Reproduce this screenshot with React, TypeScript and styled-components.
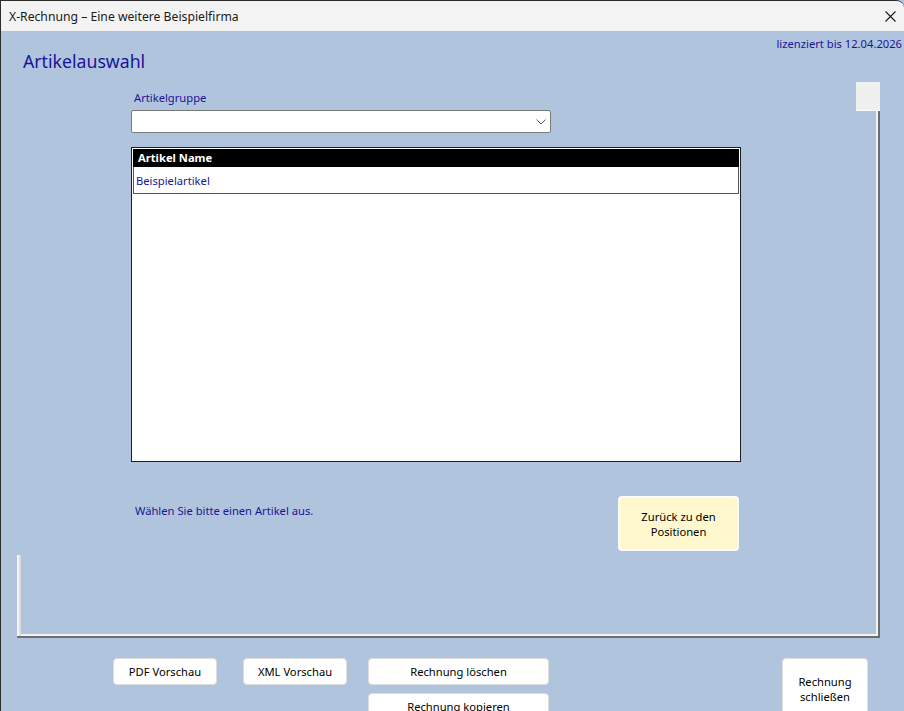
import styled, { createGlobalStyle } from "styled-components";

const GlobalStyle = createGlobalStyle`
	html, body {
		margin: 0;
		padding: 0;
		background: #b0c4de;
	}
	body {
		font-family: "Noto Sans", "Open Sans", Arial, sans-serif;
		font-size: 11.2px;
	}
`;

const TEXT_BLUE = "#1b1496";

const Window = styled.div`
	width: 904px;
	height: 711px;
	box-sizing: border-box;
	overflow: hidden;
	border-top: 1px solid #2b2b2b;
	border-left: 1px solid #2b2b2b;
	border-top-right-radius: 8px;
	background: #b0c4de;
	display: flex;
	flex-direction: column;
`;

const TitleBar = styled.div`
	height: 30px;
	flex: none;
	background: #f3f3f3;
	display: flex;
	align-items: center;
	justify-content: space-between;
	padding-left: 8px;
	color: #1a1a1a;
	font-size: 12.2px;
`;

const CloseButton = styled.div`
	width: 46px;
	height: 30px;
	display: flex;
	align-items: center;
	justify-content: center;
	margin-right: -9px;
`;

const Header = styled.div`
	height: 51px;
	flex: none;
	display: flex;
	justify-content: space-between;
	align-items: flex-start;
`;

const PageTitle = styled.h1`
	margin: 18px 0 0 22px;
	font-size: 17.7px;
	font-weight: normal;
	line-height: 24px;
	color: ${TEXT_BLUE};
`;

const License = styled.div`
	margin: 5px 2px 0 0;
	line-height: 16px;
	color: ${TEXT_BLUE};
`;

const Stage = styled.div`
	position: relative;
	flex: none;
	box-sizing: border-box;
	margin-left: 16px;
	width: 863px;
	height: 556px;
	padding: 8px 0 0 114px;
	border-right: 2px solid #6e6e6e;
	border-bottom: 2px solid #6e6e6e;
	box-shadow: inset -2px -2px 0 #f4f4f4;
	display: flex;
	flex-direction: column;

	&::before {
		content: "";
		position: absolute;
		top: 0;
		right: -2px;
		width: 24px;
		height: 28px;
		background: #f0f0f0;
		border-bottom: 1px solid #ffffff;
	}

	&::after {
		content: "";
		position: absolute;
		left: 0;
		bottom: 0;
		width: 4px;
		height: 81px;
		background: linear-gradient(to right, #f4f4f4 2px, #dcdcdc 2px);
	}
`;

const FieldLabel = styled.label`
	margin-left: 3px;
	line-height: 16px;
	color: ${TEXT_BLUE};
`;

const Select = styled.div`
	margin-top: 4px;
	width: 420px;
	height: 23px;
	box-sizing: border-box;
	background: #ffffff;
	border: 1px solid #7a7a7a;
	border-radius: 2px;
	display: flex;
	align-items: center;
	justify-content: flex-end;
	padding-right: 4px;
`;

const ListBox = styled.div`
	margin-top: 14px;
	width: 610px;
	height: 315px;
	box-sizing: border-box;
	background: #ffffff;
	border: 1px solid #1e1e1e;
	padding: 1px;
`;

const ListHeader = styled.div`
	height: 18px;
	line-height: 18px;
	background: #000000;
	color: #ffffff;
	font-weight: bold;
	padding-left: 5px;
`;

const ListRow = styled.div`
	height: 26px;
	line-height: 27px;
	border: 1px solid #555555;
	border-top: none;
	padding-left: 2px;
	color: ${TEXT_BLUE};
`;

const FooterRow = styled.div`
	margin-top: 34px;
	width: 610px;
	display: flex;
	justify-content: space-between;
	align-items: flex-start;
`;

const Hint = styled.div`
	margin: 7px 0 0 4px;
	line-height: 16px;
	color: ${TEXT_BLUE};
`;

const Button = styled.button<{ $width: number; $height?: number; $tone?: "white" | "cream" }>`
	width: ${(p) => p.$width}px;
	height: ${(p) => p.$height ?? 27}px;
	box-sizing: border-box;
	padding: 0 6px;
	font: inherit;
	line-height: 15px;
	color: #000000;
	text-align: center;
	background: ${(p) => (p.$tone === "cream" ? "#fff8cf" : "#ffffff")};
	border: ${(p) => (p.$tone === "cream" ? "2px solid #fbfbfb" : "1px solid #dedede")};
	border-radius: 4px;
	cursor: pointer;
`;

const BackButton = styled(Button)`
	margin-right: 2px;
`;

const ActionBar = styled.div`
	flex: none;
	display: flex;
	align-items: flex-start;
	padding: 20px 36px 0 112px;
`;

const ButtonStack = styled.div`
	display: flex;
	flex-direction: column;
	gap: 8px;
`;

const PdfButton = styled(Button)`
	margin-right: 26px;
`;

const XmlButton = styled(Button)`
	margin-right: 21px;
`;

const CloseInvoiceButton = styled(Button)`
	margin-left: auto;
`;

export default function App() {
	return (
		<>
			<GlobalStyle />
			<Window>
				<TitleBar>
					<span>X-Rechnung – Eine weitere Beispielfirma</span>
					<CloseButton>
						<svg width="11" height="11" viewBox="0 0 11 11">
							<path d="M0.5 0.5 L10.5 10.5 M10.5 0.5 L0.5 10.5" stroke="#1a1a1a" strokeWidth="1.1" />
						</svg>
					</CloseButton>
				</TitleBar>
				<Header>
					<PageTitle>Artikelauswahl</PageTitle>
					<License>lizenziert bis 12.04.2026</License>
				</Header>
				<Stage>
					<FieldLabel>Artikelgruppe</FieldLabel>
					<Select>
						<svg width="10" height="6" viewBox="0 0 10 6">
							<path d="M0.5 0.5 L5 5 L9.5 0.5" fill="none" stroke="#555" strokeWidth="1" />
						</svg>
					</Select>
					<ListBox>
						<ListHeader>Artikel Name</ListHeader>
						<ListRow>Beispielartikel</ListRow>
					</ListBox>
					<FooterRow>
						<Hint>Wählen Sie bitte einen Artikel aus.</Hint>
						<BackButton $width={121} $height={55} $tone="cream">
							Zurück zu den
							<br />
							Positionen
						</BackButton>
					</FooterRow>
				</Stage>
				<ActionBar>
					<PdfButton $width={104}>PDF Vorschau</PdfButton>
					<XmlButton $width={104}>XML Vorschau</XmlButton>
					<ButtonStack>
						<Button $width={181}>Rechnung löschen</Button>
						<Button $width={181}>Rechnung kopieren</Button>
					</ButtonStack>
					<CloseInvoiceButton $width={86} $height={62}>
						Rechnung schließen
					</CloseInvoiceButton>
				</ActionBar>
			</Window>
		</>
	);
}
